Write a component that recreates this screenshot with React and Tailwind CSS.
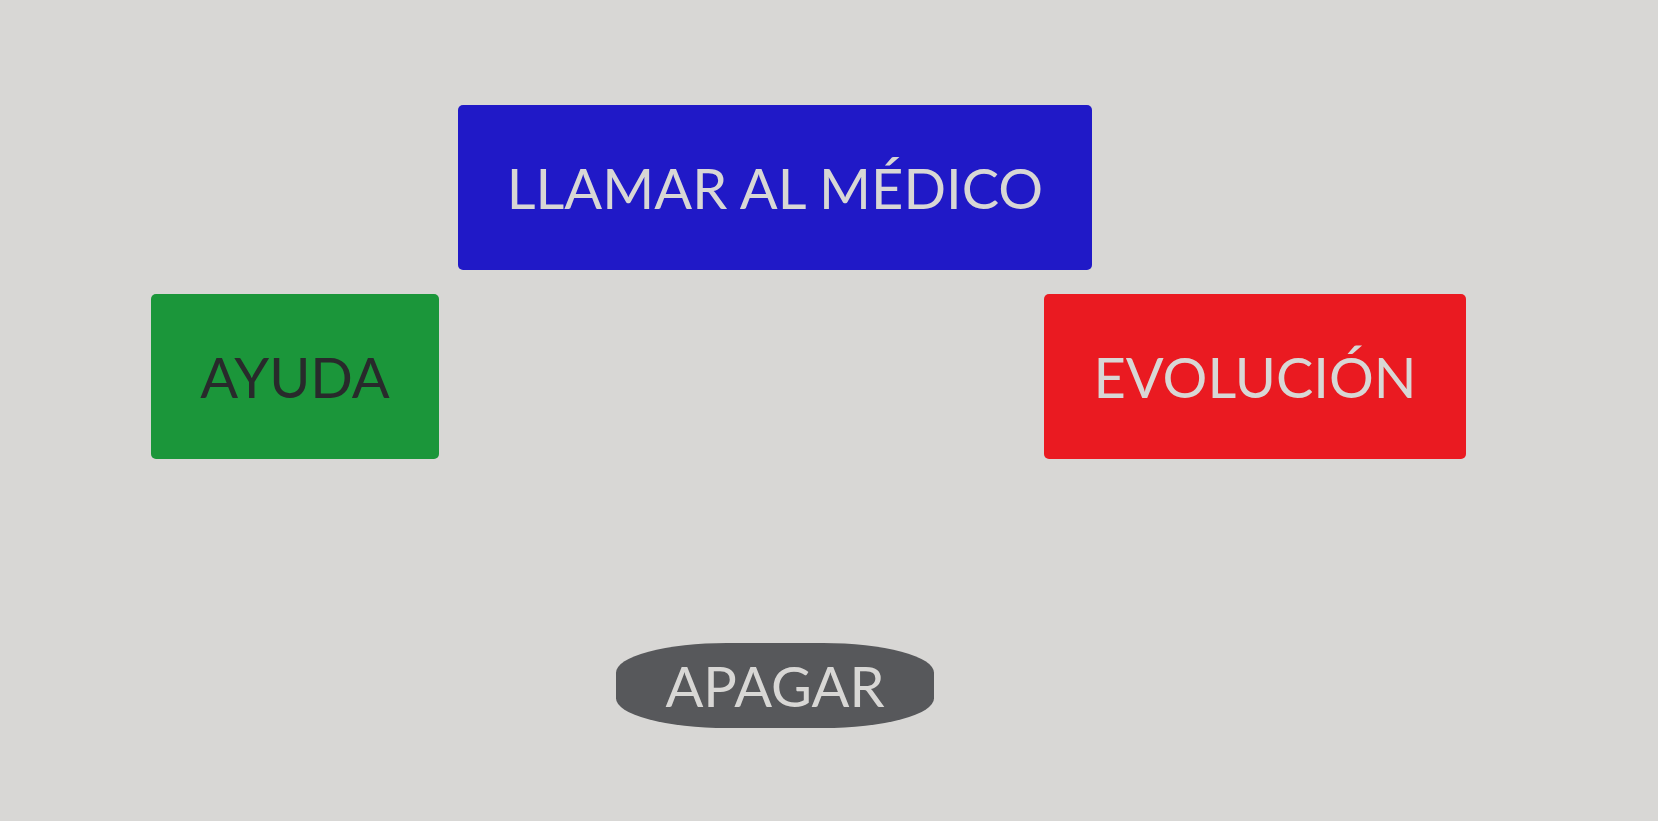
const base =
  "cursor-pointer justify-self-center whitespace-nowrap px-[49px] text-[56px] leading-[67px]";

export default function App() {
  return (
    <main className="min-h-screen bg-[#d8d7d5] pt-[105px] pr-[163px] pb-12 pl-[55px] font-['Lato',sans-serif]">
      <div className="grid grid-cols-3 gap-y-6">
        <button
          type="button"
          className={`${base} col-span-3 rounded-[5px] bg-[#2019c7] py-[49px] text-[#d8d7d5]`}
        >
          LLAMAR AL MÉDICO
        </button>
        <button
          type="button"
          className={`${base} col-start-1 rounded-[5px] bg-[#1b963a] py-[49px] text-[#282a2b]`}
        >
          AYUDA
        </button>
        <button
          type="button"
          className={`${base} col-start-3 rounded-[5px] bg-[#ea1a21] py-[49px] text-[#d8d7d5]`}
        >
          EVOLUCIÓN
        </button>
        <button
          type="button"
          className={`${base} col-span-3 mt-40 rounded-[35%] bg-[#57585b] py-[9px] text-[#d8d7d5]`}
        >
          APAGAR
        </button>
      </div>
    </main>
  );
}
